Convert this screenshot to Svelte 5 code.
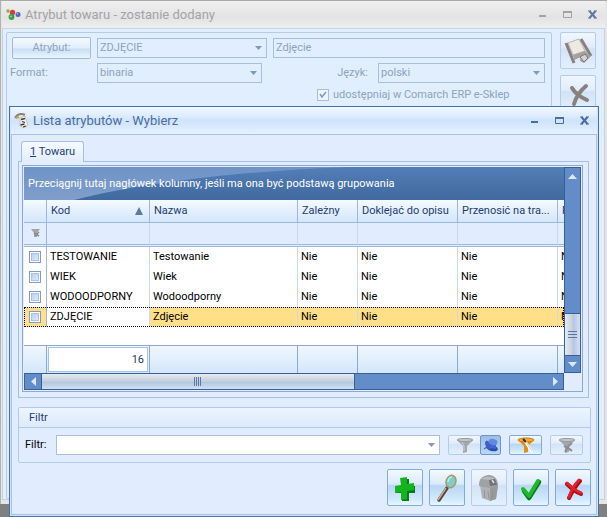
<script lang="ts">
  type Row = { code: string; name: string; checked: boolean };

  let rows: Row[] = $state([
    { code: 'TESTOWANIE', name: 'Testowanie', checked: false },
    { code: 'WIEK', name: 'Wiek', checked: false },
    { code: 'WODOODPORNY', name: 'Wodoodporny', checked: false },
    { code: 'ZDJĘCIE', name: 'Zdjęcie', checked: false },
  ]);

  let selected = $state('ZDJĘCIE');

  const columns = ['Nazwa', 'Zależny', 'Doklejać do opisu', 'Przenosić na tra...', 'P'];
  const flags = ['Nie', 'Nie', 'Nie', 'N'];
</script>

{#snippet windowButtons()}
  <div class="window-buttons">
    <button aria-label="Minimalizuj">
      <svg width="10" height="10"><path d="M1 6h7" stroke="currentColor" stroke-width="2" /></svg>
    </button>
    <button aria-label="Maksymalizuj">
      <svg width="10" height="10">
        <path d="M.5 1.500h8v6h-8z" fill="none" stroke="currentColor" />
        <path d="M0 2h9" stroke="currentColor" stroke-width="2" />
      </svg>
    </button>
    <button class="close" aria-label="Zamknij">
      <svg width="10" height="10">
        <path d="M1.500 1l6 7M7.500 1l-6 7" stroke="currentColor" stroke-width="2" />
        <path d="M0 1h3M6 1h3M0 8h3M6 8h3" stroke="currentColor" />
      </svg>
    </button>
  </div>
{/snippet}

<div class="desktop">
  <section class="window parent">
    <header class="titlebar">
      <svg class="app-icon" width="15" height="14" viewBox="0 0 15 14">
        <circle cx="2" cy="3" r="1.700" fill="#9aa83c" />
        <circle cx="6.500" cy="4.500" r="2.700" fill="#d4413a" />
        <circle cx="5.500" cy="9" r="2.900" fill="#3d9e45" />
        <circle cx="12" cy="6.500" r="2.500" fill="#4a68bd" />
        <circle cx="5" cy="8.300" r=".9" fill="#a4e2a4" />
        <circle cx="11.400" cy="5.800" r=".8" fill="#b4c4f0" />
      </svg>
      <h1>Atrybut towaru - zostanie dodany</h1>
      {@render windowButtons()}
    </header>

    <div class="parent-body">
      <form class="panel">
        <div class="line">
          <button type="button" class="attr" disabled>Atrybut:</button>
          <select class="code" aria-label="Kod atrybutu" disabled><option>ZDJĘCIE</option></select>
          <input class="name" aria-label="Nazwa atrybutu" value="Zdjęcie" disabled />
        </div>
        <div class="line">
          <label class="format-label" for="format">Format:</label>
          <select id="format" class="format" disabled><option>binaria</option></select>
          <label class="lang-label" for="lang">Język:</label>
          <select id="lang" class="lang" disabled><option>polski</option></select>
        </div>
        <div class="line share">
          <input type="checkbox" id="share" checked disabled />
          <label for="share">udostępniaj w Comarch ERP e-Sklep</label>
        </div>
      </form>
      <div class="side">
        <button class="tool" aria-label="Zapisz" disabled>
          <svg width="32" height="32" viewBox="0 0 32 32">
            <path d="M6 8L17 4 23 16 11 20z" fill="#efe9e3" stroke="#b9b5b1" />
            <path d="M4 8l8 20" stroke="#85827f" stroke-width="3" />
            <path d="M19 4l10 17" stroke="#85827f" stroke-width="3" />
            <path d="M11 20l12-4 6 5-7 7-4-2 1-4-7 3z" fill="#a5a19e" />
            <path d="M18 22l5-3 3 4-4 4z" fill="#d8d3ce" stroke="#777" />
          </svg>
        </button>
        <button class="tool" aria-label="Anuluj" disabled>
          <svg width="32" height="32" viewBox="0 0 32 32">
            <path d="M10 10c3 5 8 9 15 12M24 8C18 13 14 19 12 26" fill="none" stroke="#85827f" stroke-width="4" stroke-linecap="round" />
          </svg>
        </button>
      </div>
    </div>
  </section>

  <section class="window dialog">
    <header class="titlebar">
      <svg class="app-icon" width="15" height="16" viewBox="0 0 15 16">
        <path d="M1 5C3 1 7 0 11 2" fill="none" stroke="#8a8473" stroke-width="2" />
        <path d="M2 5l3-1" stroke="#c9a24b" stroke-width="2" />
        <path d="M6 5l5-2 3 9-4 3-4-2z" fill="#f4f1e8" stroke="#c9c4b5" />
        <path d="M7 6.500l4-1M8 8.500l3 1M6.500 12l4-1M9 14l3-1" stroke="#3a3a3a" stroke-width="1.300" />
      </svg>
      <h2>Lista atrybutów - Wybierz</h2>
      {@render windowButtons()}
    </header>

    <div class="dialog-body">
      <div class="tabs" role="tablist">
        <button class="tab" role="tab" aria-selected="true"><u>1</u> Towaru</button>
      </div>

      <div class="tab-page" role="tabpanel">
        <div class="grid">
          <div class="grid-view">
            <div class="group-panel">
              <svg class="swoosh" viewBox="0 0 540 33" preserveAspectRatio="none">
                <defs>
                  <linearGradient id="shine" x2="0" y2="1">
                    <stop stop-color="#6f93c6" />
                    <stop offset="1" stop-color="#7f9ecb" />
                  </linearGradient>
                </defs>
                <path d="M0 0H325C220 4 120 15 50 33H0z" fill="url(#shine)" />
              </svg>
              <span>Przeciągnij tutaj nagłówek kolumny, jeśli ma ona być podstawą grupowania</span>
            </div>
            <table>
              <colgroup>
                <col class="c-check" /><col class="c-code" /><col class="c-name" /><col class="c-dep" />
                <col class="c-flag" /><col class="c-flag" /><col />
              </colgroup>
              <thead>
                <tr class="heads">
                  <th aria-label="Zaznacz"></th>
                  <th aria-sort="ascending">
                    <div class="sorted">
                      Kod
                      <svg width="8" height="8"><path d="M4 0l4 8H0z" fill="#5b78a9" /></svg>
                    </div>
                  </th>
                  {#each columns as column}
                    <th>{column}</th>
                  {/each}
                </tr>
                <tr class="filters">
                  <td>
                    <svg width="10" height="10" viewBox="0 0 10 10">
                      <path d="M0 1h9L6 5v4H3V5z" fill="#a5a5a5" />
                      <path d="M3 5l5 3M8 4L4 8" stroke="#8a8a8a" stroke-width="1.500" />
                    </svg>
                  </td>
                  <td></td>
                  {#each columns as _}
                    <td></td>
                  {/each}
                </tr>
              </thead>
              <tbody>
                {#each rows as row}
                  <tr class:selected={row.code === selected} onclick={() => (selected = row.code)}>
                    <td class="check"><input type="checkbox" aria-label={row.code} bind:checked={row.checked} /></td>
                    <td class="code-cell">{row.code}</td>
                    <td>{row.name}</td>
                    {#each flags as flag}
                      <td>{flag}</td>
                    {/each}
                  </tr>
                {/each}
              </tbody>
              <tfoot>
                <tr class="spacer"><td colspan="7"></td></tr>
                <tr class="totals">
                  <td></td>
                  <td><div class="count">16</div></td>
                  {#each columns as _}
                    <td></td>
                  {/each}
                </tr>
              </tfoot>
            </table>
          </div>

          <div class="vscroll">
            <button aria-label="W górę"><svg width="9" height="5"><path d="M4.500 0L9 5H0z" fill="#dbe8fa" /></svg></button>
            <div class="thumb"><svg width="9" height="8"><path d="M0 .5h9M0 3.500h9M0 6.500h9" stroke="#58789f" /></svg></div>
            <button aria-label="W dół"><svg width="9" height="5"><path d="M0 0h9L4.500 5z" fill="#dbe8fa" /></svg></button>
          </div>

          <div class="hscroll">
            <button aria-label="W lewo"><svg width="5" height="9"><path d="M5 0v9L0 4.500z" fill="#dbe8fa" /></svg></button>
            <div class="thumb"><svg width="8" height="9"><path d="M.5 0v9M2.500 0v9M4.500 0v9M6.500 0v9" stroke="#58789f" /></svg></div>
            <button aria-label="W prawo"><svg width="5" height="9"><path d="M0 0v9l5-4.500z" fill="#dbe8fa" /></svg></button>
          </div>
        </div>
      </div>

      <section class="filter-box">
        <h3>Filtr</h3>
        <div class="filter-line">
          <label for="filter">Filtr:</label>
          <select id="filter"><option></option></select>
          <div class="pair">
            <button class="small" aria-label="Filtruj" disabled>
              <svg width="18" height="17" viewBox="0 0 18 17">
                <path d="M1 3l6 6v7l4-1V9l6-6z" fill="#a3a6aa" />
                <ellipse cx="9" cy="3" rx="8" ry="1.500" fill="#c5c8cc" stroke="#96999d" />
                <path d="M6 5l2 4v5" fill="none" stroke="#cfd2d6" />
              </svg>
            </button>
            <button class="small pressed" aria-label="Przypnij filtr">
              <svg width="16" height="16" viewBox="0 0 16 16">
                <path d="M1 12l3-2" stroke="#5b6f9f" stroke-width="1.500" />
                <ellipse cx="9" cy="11" rx="6" ry="3" transform="rotate(15 9 11)" fill="#2c4cae" />
                <ellipse cx="5" cy="8" rx="2.500" ry="4.500" transform="rotate(-20 5 8)" fill="#3c5fc4" />
                <path d="M6 5l7 1v6l-6-1z" fill="#3f65d0" />
                <ellipse cx="10" cy="5" rx="4.500" ry="3" transform="rotate(15 10 5)" fill="#6287e6" />
              </svg>
            </button>
          </div>
          <button class="small build" aria-label="Konstruktor filtra">
            <svg width="18" height="17" viewBox="0 0 18 17">
              <path d="M1 3l6 6v7l4-1V9l6-6z" fill="#e58e14" />
              <ellipse cx="9" cy="3" rx="8" ry="2" fill="#f5ac30" stroke="#c77a0d" />
              <path d="M8 4l7 11" stroke="#fff" stroke-width="2.500" />
              <path d="M6 2l3 3" stroke="#333" stroke-width="2" />
              <path d="M9 5l6 9" stroke="#b8b8b8" stroke-width=".7" />
            </svg>
          </button>
          <button class="small" aria-label="Wyczyść filtr" disabled>
            <svg width="18" height="17" viewBox="0 0 18 17">
              <path d="M1 3l6 6v7l4-1V9l6-6z" fill="#a3a6aa" />
              <ellipse cx="9" cy="3" rx="8" ry="1.500" fill="#c5c8cc" stroke="#96999d" />
              <path d="M6 9c3 1 6 3 8 5M14 6c-3 2-5 5-7 9" fill="none" stroke="#8c8e91" stroke-width="2" />
            </svg>
          </button>
        </div>
      </section>

      <footer class="actions">
        <button class="tool" aria-label="Dodaj">
          <svg width="34" height="34" viewBox="0 0 34 34">
            <path d="M13 8h8v7h6v7h-6v8h-7v-8H8v-7h6z" fill="#067d12" />
            <path d="M12 7l7-1v7l7-1v7l-7 1v8l-6 1v-8l-6 1v-7l6-1z" fill="#12b51e" />
          </svg>
        </button>
        <button class="tool" aria-label="Podgląd">
          <svg width="34" height="34" viewBox="0 0 34 34">
            <path d="M17 17L9 29" stroke="#57423a" stroke-width="3.500" stroke-linecap="round" />
            <path d="M16 17L8 29" stroke="#c8a98b" stroke-width="1.500" />
            <ellipse cx="21" cy="10.500" rx="4.800" ry="6.300" transform="rotate(20 21 10.500)" fill="#7fcfc8" stroke="#a69a63" stroke-width="1.500" />
            <path d="M18 11c0-3 2-5 4-5" fill="none" stroke="#c5f0ea" stroke-width="1.500" />
          </svg>
        </button>
        <button class="tool off" aria-label="Usuń" disabled>
          <svg width="34" height="34" viewBox="0 0 34 34">
            <path d="M8 14l9 2 9-2-2 14-6 2-8-3z" fill="#b0b2b5" />
            <path d="M18 16l8-2-2 14-6 2z" fill="#97999c" />
            <path d="M7 14c0-6 3-9 9-10 5 0 9 2 10 9v2l-9 2-10-2z" fill="#a0a2a5" />
            <path d="M9 8c4-3 10-3 14 0l-5 1z" fill="#b9bbbe" />
            <path d="M17 9l6-1 2 6-7 1z" fill="#707275" />
            <path d="M20 9l2 3" stroke="#dedede" stroke-width="1.500" />
            <path d="M12 19l1 8M16 20l1 8M21 20l-1 8" stroke="#909295" />
          </svg>
        </button>
        <button class="tool" aria-label="Wybierz">
          <svg width="34" height="34" viewBox="0 0 34 34">
            <path d="M10 20l5 7L25 11" fill="none" stroke="#087716" stroke-width="4.500" stroke-linecap="round" stroke-linejoin="round" />
            <path d="M9 18l6 7L24 10" fill="none" stroke="#1cb92b" stroke-width="4" stroke-linecap="round" stroke-linejoin="round" />
          </svg>
        </button>
        <button class="tool" aria-label="Zamknij okno">
          <svg width="34" height="34" viewBox="0 0 34 34">
            <path d="M11 13c4 4 9 8 14 10M24 10c-5 5-8 11-11 17" fill="none" stroke="#a30d18" stroke-width="4" stroke-linecap="round" />
            <path d="M11 12c4 4 9 8 14 10M23 9c-5 5-8 11-10 17" fill="none" stroke="#e5202c" stroke-width="3" stroke-linecap="round" />
          </svg>
        </button>
      </footer>
    </div>
  </section>
</div>

<style>
  :global(body) {
    margin: 0;
    background: #808080;
  }

  .desktop {
    display: grid;
    min-height: 100vh;
    font: 11px/14px Roboto, 'Liberation Sans', sans-serif;
    color: #000;
  }

  .desktop :is(button, input, select) {
    box-sizing: border-box;
    margin: 0;
    padding: 0;
    font: inherit;
    color: inherit;
    border-radius: 0;
  }

  .desktop svg {
    display: block;
    flex: none;
  }

  /* both windows share one cell, the dialog lies on top */
  .window {
    grid-area: 1 / 1;
    display: flex;
    flex-direction: column;
    min-width: 0;
    box-sizing: border-box;
  }

  .parent {
    margin-bottom: 14px;
    padding: 0 2px 4px 1px;
    border-top: 1px solid #a9a9a9;
    border-left: 1px solid #b5b1ae;
    background: #e6e5e6;
  }

  .dialog {
    margin: 106px 8px 1px 9px;
    padding: 0 1px 1px;
    border: 1px solid #4473a8;
    background: #cfe3fb;
  }

  .titlebar {
    display: flex;
    align-items: center;
    height: 27px;
    padding: 0 7px 0 4px;
    gap: 4px;
    background: linear-gradient(#f1f0f0, #e4e3e3 60%, #efeeee);
    color: #a3a3a6;
  }

  .dialog .titlebar {
    padding-left: 3px;
    background: linear-gradient(#f2f8ff, #dcebfd 35%, #cfe3fb 50%, #e4f1ff);
    color: #4a6c9e;
  }

  h1,
  h2 {
    flex: 1;
    margin: 0;
    font-size: 13px;
    font-weight: 400;
    line-height: 18px;
  }

  .window-buttons {
    display: flex;
    gap: 15px;
  }

  .window-buttons button {
    width: 10px;
    height: 10px;
    border: 0;
    background: none;
  }

  .parent .close {
    color: #5d79a3;
  }

  .parent-body {
    flex: 1;
    display: flex;
    gap: 8px;
    padding: 3px 8px 0 3px;
    border: 1px solid #c3d3ea;
    background: #e1eefe;
    color: #8ea2bd;
  }

  .panel {
    flex: 1;
    display: flex;
    flex-direction: column;
    gap: 4px;
    min-width: 0;
    padding: 4px 6px 0 3px;
    border: 1px solid #b5cbe8;
    border-radius: 2px;
  }

  .line {
    display: flex;
    align-items: center;
    height: 21px;
  }

  .parent select,
  .parent .name {
    height: 20px;
    padding: 0 2px;
    border: 1px solid #a6bfdf;
    background-color: transparent;
    opacity: 1;
  }

  select {
    appearance: none;
    background: no-repeat right 4px center / 7px 4px
      url("data:image/svg+xml,%3Csvg xmlns='http://www.w3.org/2000/svg' viewBox='0 0 7 4'%3E%3Cpath d='M0 0h7L3.500 4z' fill='%237f98bc'/%3E%3C/svg%3E");
  }

  .line .attr {
    width: 79px;
    height: 22px;
    margin: 0 6px 0 2px;
    border: 1px solid #9fbbe0;
    border-radius: 2px;
    background: linear-gradient(#f4f9ff, #e1eefc 50%, #c9dff3 55%, #e9f5ff);
  }

  .line .code {
    width: 170px;
    margin-right: 6px;
  }

  .name {
    flex: 1;
    min-width: 0;
  }

  .format-label {
    width: 87px;
  }

  .format {
    width: 165px;
  }

  .lang-label {
    flex: 1;
    padding-right: 10px;
    text-align: right;
  }

  .lang {
    width: 167px;
  }

  .share {
    gap: 4px;
    height: 16px;
    padding-left: 307px;
  }

  input[type='checkbox'] {
    appearance: none;
    display: block;
    width: 12px;
    height: 12px;
    border: 1px solid #7d9cc8;
    background: linear-gradient(135deg, #b3cbec, #e6f0fc);
    background-clip: content-box;
    box-shadow: inset 0 0 0 1px #fff, inset 0 0 0 2px #a9c3e8;
  }

  #share {
    border-color: #a6bfdf;
    background: #edf4fd
      url("data:image/svg+xml,%3Csvg xmlns='http://www.w3.org/2000/svg' viewBox='0 0 10 10'%3E%3Cpath d='M2 4l2 3 4-5' fill='none' stroke='%237f98bc' stroke-width='1.500'/%3E%3C/svg%3E");
    box-shadow: none;
  }

  .side {
    display: flex;
    flex-direction: column;
    gap: 6px;
  }

  .tool,
  .small {
    display: flex;
    align-items: center;
    justify-content: center;
    border: 1px solid #7fabe0;
    background: linear-gradient(#f3f9ff, #dbeafb 40%, #b8d5f3 45%, #d3eafd 85%, #e8f7ff);
  }

  .tool {
    width: 36px;
    height: 37px;
  }

  .desktop :is(.tool, .small) {
    border-radius: 2px;
  }

  .tool:disabled,
  .small:disabled {
    border-color: #b4cdec;
    background: linear-gradient(#f0f6fe, #e2edfb 40%, #d3e3f6 45%, #e3f0fd);
  }

  .dialog-body {
    flex: 1;
    padding: 6px 5px 8px 6px;
    border: 1px solid #a6c2e6;
    background: #e1edfe;
    color: #1f3d6e;
  }

  .tabs {
    display: flex;
    padding-left: 3px;
  }

  .tabs .tab {
    height: 21px;
    margin-bottom: -1px;
    padding: 0 8px;
    border: 1px solid #a3bfe5;
    border-bottom: 0;
    border-radius: 3px 3px 0 0;
    background: linear-gradient(#f6faff, #e1edfe);
    z-index: 1;
  }

  .tab-page {
    margin-right: 2px;
    padding: 3px 5px 5px 3px;
    border: 1px solid #a3bfe5;
  }

  .grid {
    display: grid;
    grid-template-columns: minmax(0, 1fr) 17px;
    padding: 1px;
    border: 1px solid #8ea9cf;
  }

  .group-panel {
    display: grid;
    align-items: center;
    height: 33px;
    background: linear-gradient(#547eb7, #40699f);
    color: #fff;
  }

  .group-panel > * {
    grid-area: 1 / 1;
  }

  .group-panel span {
    padding-left: 4px;
    overflow: hidden;
    white-space: nowrap;
  }

  .swoosh {
    width: 100%;
    height: 33px;
  }

  table {
    width: 100%;
    table-layout: fixed;
    border-collapse: separate;
    border-spacing: 0;
    background: #fff;
  }

  .c-check {
    width: 23px;
  }

  .c-code {
    width: 103px;
  }

  .c-name {
    width: 148px;
  }

  .c-dep {
    width: 60px;
  }

  .c-flag {
    width: 100px;
  }

  th,
  td {
    box-sizing: border-box;
    padding: 0 0 0 3px;
    border-right: 1px solid #c9daf0;
    overflow: hidden;
    font-weight: 400;
    text-align: left;
    white-space: nowrap;
  }

  th:last-child,
  td:last-child {
    border-right: 0;
  }

  .heads th {
    height: 23px;
    padding-left: 4px;
    border-right-color: #9db8dc;
    border-bottom: 1px solid #9db8dc;
    background: linear-gradient(#f5faff, #e3effd 50%, #d5e7fb);
  }

  .sorted {
    display: flex;
    align-items: center;
    justify-content: space-between;
    padding-right: 6px;
  }

  .filters td {
    height: 24px;
    padding: 0 0 2px 7px;
    border-bottom: 3px double #9db8dc;
    background: #e1edfe;
  }

  tbody td {
    height: 20px;
    color: #000;
  }

  td:first-child,
  th:first-child {
    border-right-color: #9db8dc;
  }

  .check {
    padding-left: 5px;
  }

  .selected {
    outline: 1px dotted #000;
    outline-offset: -1px;
  }

  .selected td:not(.code-cell) {
    background: #ffe088;
  }

  .spacer td {
    height: 18px;
  }

  .totals td {
    height: 28px;
    padding: 0;
    border-top: 1px solid #8ea9cf;
    border-right-color: #8ea9cf;
    background: linear-gradient(#f0f7ff, #d3e6fb);
  }

  .count {
    margin: 0 1px;
    padding: 5px 3px 4px 0;
    border: 1px solid #a6c2e6;
    background: #fff;
    text-align: right;
  }

  .vscroll,
  .hscroll {
    display: flex;
    box-sizing: border-box;
    border: 1px solid #385f98;
    background: #628dc8;
  }

  .vscroll {
    flex-direction: column;
  }

  .hscroll {
    height: 17px;
  }

  .vscroll button,
  .hscroll button {
    display: flex;
    align-items: center;
    justify-content: center;
    width: 16px;
    height: 15px;
    border: 0;
    background: none;
  }

  .vscroll button {
    width: 15px;
    height: 16px;
  }

  .thumb {
    display: flex;
    align-items: center;
    justify-content: center;
  }

  .vscroll .thumb {
    height: 41px;
    margin-top: auto;
    border: solid #385f98;
    border-width: 1px 0;
    background: linear-gradient(90deg, #e6ebf2, #c3cedd 50%, #b3c6e2 55%, #d3e0f1);
  }

  .hscroll .thumb {
    width: 58%;
    margin-right: auto;
    border: solid #385f98;
    border-width: 0 1px;
    background: linear-gradient(#e6ebf2, #c3cedd 50%, #b3c6e2 55%, #d3e0f1);
  }

  .filter-box {
    margin-top: 9px;
    border: 1px solid #b0cbed;
    border-radius: 2px;
  }

  h3 {
    margin: 0;
    padding: 3px 10px 2px;
    border-bottom: 1px solid #b0cbed;
    background: linear-gradient(#edf5ff, #dceafd);
    font-size: 11px;
    font-weight: 400;
    line-height: 14px;
  }

  .filter-line {
    display: flex;
    align-items: center;
    gap: 8px;
    padding: 7px 7px 7px 6px;
    color: #000;
  }

  .filter-line label {
    width: 23px;
  }

  #filter {
    flex: 1;
    min-width: 0;
    height: 20px;
    border: 1px solid #a6c0e2;
    background-color: #fff;
  }

  .pair {
    display: flex;
  }

  .small {
    width: 33px;
    height: 20px;
  }

  .pair .small + .small {
    width: 21px;
    margin-left: -1px;
  }

  .pressed {
    border-color: #6d96cc;
    background: linear-gradient(#9dbde6, #bcd6f5);
  }

  .actions {
    display: flex;
    justify-content: flex-end;
    gap: 6px;
    padding-top: 6px;
  }
</style>
